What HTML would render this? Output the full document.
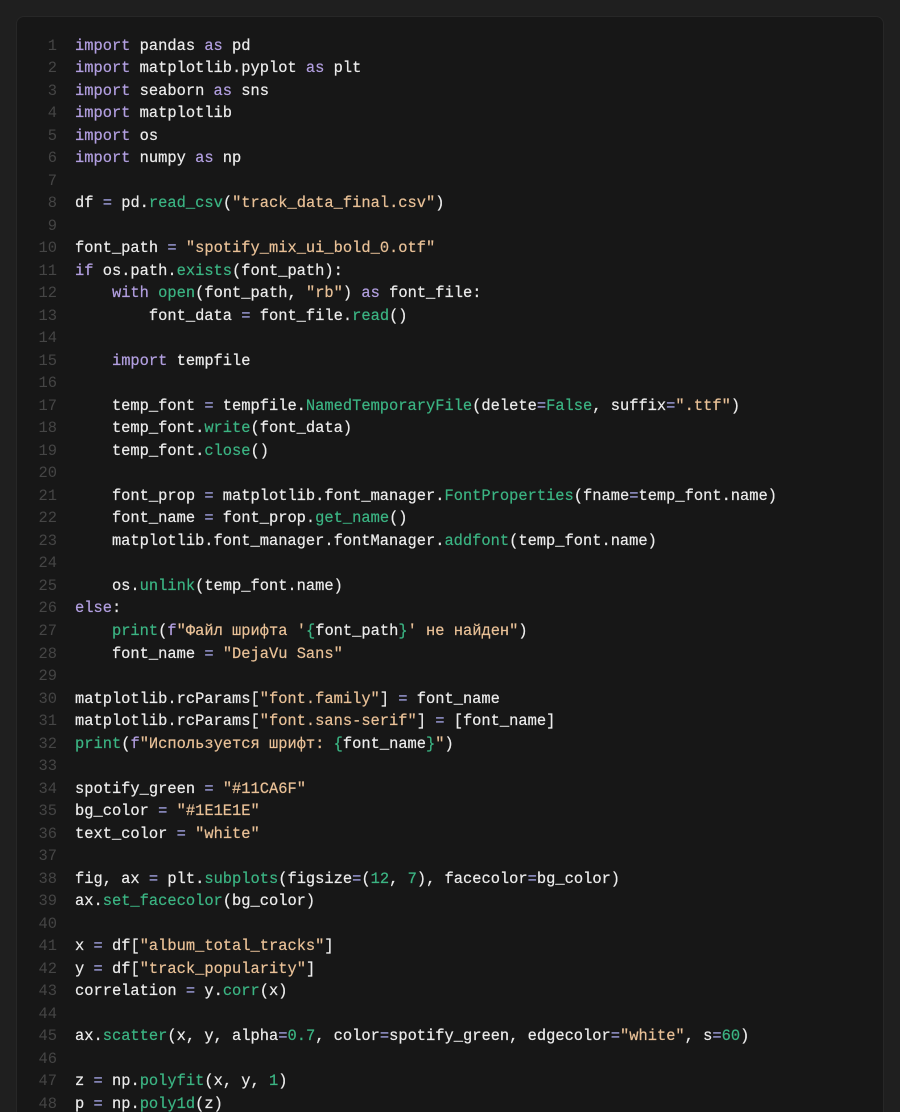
<!DOCTYPE html>
<html lang="ru">
<head>
<meta charset="utf-8">
<title>Code</title>
<style>
html,body{margin:0;padding:0;background:#1f1f1f;width:900px;height:1112px;overflow:hidden;}
.page{position:absolute;left:0;top:0;width:900px;height:1112px;overflow:hidden;background:#1f1f1f;}
.card{position:absolute;left:16px;top:16px;width:866px;height:1120px;background:#171717;border:1px solid #272727;border-radius:8px;}
pre{position:absolute;margin:0;font-family:"Liberation Mono",monospace;font-size:15.4px;line-height:22.51px;white-space:pre;}
.nums{left:30px;top:34.6px;width:27px;text-align:right;color:#454545;}
.code{left:75px;top:34.6px;color:#ececec;-webkit-text-stroke:0.2px #ececec;}
.k{color:#b29fe0;-webkit-text-stroke:0.2px #b29fe0;}
.f{color:#3bb483;-webkit-text-stroke:0.2px #3bb483;}
.s{color:#e9c197;-webkit-text-stroke:0.2px #e9c197;}
.o{color:#9a9ad6;-webkit-text-stroke:0.2px #9a9ad6;}
.c{color:#3bb483;-webkit-text-stroke:0.2px #3bb483;}
</style>
</head>
<body>
<div class="page">
<div class="card"></div>
<pre class="nums">1
2
3
4
5
6
7
8
9
10
11
12
13
14
15
16
17
18
19
20
21
22
23
24
25
26
27
28
29
30
31
32
33
34
35
36
37
38
39
40
41
42
43
44
45
46
47
48</pre>
<pre class="code"><span class="k">import</span> pandas <span class="k">as</span> pd
<span class="k">import</span> matplotlib.pyplot <span class="k">as</span> plt
<span class="k">import</span> seaborn <span class="k">as</span> sns
<span class="k">import</span> matplotlib
<span class="k">import</span> os
<span class="k">import</span> numpy <span class="k">as</span> np

df <span class="o">=</span> pd.<span class="f">read_csv</span>(<span class="s">"track_data_final.csv"</span>)

font_path <span class="o">=</span> <span class="s">"spotify_mix_ui_bold_0.otf"</span>
<span class="k">if</span> os.path.<span class="f">exists</span>(font_path):
    <span class="k">with</span> <span class="f">open</span>(font_path, <span class="s">"rb"</span>) <span class="k">as</span> font_file:
        font_data <span class="o">=</span> font_file.<span class="f">read</span>()

    <span class="k">import</span> tempfile

    temp_font <span class="o">=</span> tempfile.<span class="f">NamedTemporaryFile</span>(delete<span class="o">=</span><span class="c">False</span>, suffix<span class="o">=</span><span class="s">".ttf"</span>)
    temp_font.<span class="f">write</span>(font_data)
    temp_font.<span class="f">close</span>()

    font_prop <span class="o">=</span> matplotlib.font_manager.<span class="f">FontProperties</span>(fname<span class="o">=</span>temp_font.name)
    font_name <span class="o">=</span> font_prop.<span class="f">get_name</span>()
    matplotlib.font_manager.fontManager.<span class="f">addfont</span>(temp_font.name)

    os.<span class="f">unlink</span>(temp_font.name)
<span class="k">else</span>:
    <span class="f">print</span>(<span class="k">f</span><span class="s">"Файл шрифта '</span><span class="c">{</span>font_path<span class="c">}</span><span class="s">' не найден"</span>)
    font_name <span class="o">=</span> <span class="s">"DejaVu Sans"</span>

matplotlib.rcParams[<span class="s">"font.family"</span>] <span class="o">=</span> font_name
matplotlib.rcParams[<span class="s">"font.sans-serif"</span>] <span class="o">=</span> [font_name]
<span class="f">print</span>(<span class="k">f</span><span class="s">"Используется шрифт: </span><span class="c">{</span>font_name<span class="c">}</span><span class="s">"</span>)

spotify_green <span class="o">=</span> <span class="s">"#11CA6F"</span>
bg_color <span class="o">=</span> <span class="s">"#1E1E1E"</span>
text_color <span class="o">=</span> <span class="s">"white"</span>

fig, ax <span class="o">=</span> plt.<span class="f">subplots</span>(figsize<span class="o">=</span>(<span class="c">12</span>, <span class="c">7</span>), facecolor<span class="o">=</span>bg_color)
ax.<span class="f">set_facecolor</span>(bg_color)

x <span class="o">=</span> df[<span class="s">"album_total_tracks"</span>]
y <span class="o">=</span> df[<span class="s">"track_popularity"</span>]
correlation <span class="o">=</span> y.<span class="f">corr</span>(x)

ax.<span class="f">scatter</span>(x, y, alpha<span class="o">=</span><span class="c">0.7</span>, color<span class="o">=</span>spotify_green, edgecolor<span class="o">=</span><span class="s">"white"</span>, s<span class="o">=</span><span class="c">60</span>)

z <span class="o">=</span> np.<span class="f">polyfit</span>(x, y, <span class="c">1</span>)
p <span class="o">=</span> np.<span class="f">poly1d</span>(z)</pre>
</div>
</body>
</html>
